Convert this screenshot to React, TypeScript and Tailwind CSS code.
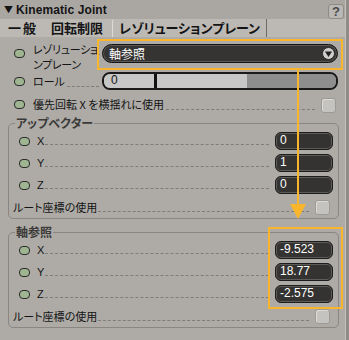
import React from 'react';

// small building blocks for the property panel
const Dot = () => (
  <span className="block w-[11px] h-[9px] rounded-[4px] bg-[#9fb591] border border-[#2a2a2a] shrink-0" />
);

const Dashes = ({ className = '' }: { className?: string }) => (
  <span className={`flex-1 border-b border-dashed border-[#7f7d79] ${className}`} />
);

const Check = () => (
  <span className="block w-[15px] h-[15px] rounded-[3px] bg-[#c5c3c0] border border-[#9c9a96] shadow-[inset_1px_1px_0_#dedcd9] shrink-0" />
);

const Field = ({ value }: { value: string }) => (
  <div className="w-[58px] h-[18px] rounded-[6px] bg-[#343331] border border-[#1c1c1c] shadow-[inset_0_0_0_1px_#5e5c59] text-white text-[12px] leading-[15px] pl-[4px] font-['Liberation_Sans',sans-serif] shrink-0">
    {value}
  </div>
);

const VecRow = ({ label, value }: { label: string; value: string }) => (
  <div className="h-[22px] flex items-center pl-[10px] pr-[5px]">
    <Dot />
    <span className="ml-[7px] text-[11px] leading-[14px] font-['Liberation_Sans',sans-serif]">{label}</span>
    <Dashes className="self-end mb-[7px] ml-[1px]" />
    <span className="ml-[6px]">
      <Field value={value} />
    </span>
  </div>
);

const RootRow = () => (
  <div className="h-[22px] flex items-center pl-[4px] pr-[8px]">
    <span className="text-[11px] leading-[14px]">ルート座標の使用</span>
    <Dashes className="self-end mb-[6px] ml-[1px] mr-[6px]" />
    <Check />
  </div>
);

const Group = ({ title, values, className = '' }: { title: string; values: string[]; className?: string }) => (
  <fieldset className={`ml-[8px] w-[331px] border border-[#8a8783] rounded-[5px] ${className}`}>
    <legend className="ml-[6px] px-[1px] text-[12px] leading-[14px] font-bold text-[#3b3a38]">{title}</legend>
    <VecRow label="X" value={values[0]} />
    <VecRow label="Y" value={values[1]} />
    <VecRow label="Z" value={values[2]} />
    <RootRow />
  </fieldset>
);

export default function App() {
  return (
    <div className="w-[349px] h-[340px] flex bg-[#8f8c88] text-[#141414] font-['Noto_Sans_CJK_JP','Noto_Sans',sans-serif] [font-feature-settings:'palt'] overflow-hidden">
      <div className="relative w-[346px] h-full bg-[#aeaba7] border-r border-[#c4c1bd] flex flex-col">
        {/* title bar */}
        <div className="h-[19px] flex items-center bg-[#aaa7a3] pl-[4px]">
          <span className="text-[9px] leading-none mr-[3px]">▼</span>
          <span className="text-[12px] font-bold font-['Liberation_Sans',sans-serif] tracking-[0.1px]">Kinematic Joint</span>
          <span className="ml-auto mr-[1px] w-[16px] h-[15px] rounded-[3px] bg-[#bab8b4] border border-[#8e8b87] text-[#4a4a4a] text-[13px] leading-[13px] font-bold text-center font-['Liberation_Sans',sans-serif] self-end">
            ?
          </span>
        </div>

        {/* tabs */}
        <div className="h-[18px] flex items-end bg-[#bcb9b5] text-[13px] font-bold leading-[16px]">
          <div className="h-[18px] flex items-center pl-[8px] pr-[9px] tracking-[2px]">一般</div>
          <div className="h-[18px] flex items-center px-[4px]">回転制限</div>
          <div className="h-[18px] flex items-center ml-[5px] px-[6px] border-l border-[#dedbd7] border-r border-r-[#6e6b67] rounded-tl-[3px] bg-[#bcb9b5]">
            レゾリューションプレーン
          </div>
        </div>

        {/* top rows */}
        <div className="pt-[4px]">
          <div className="h-[29px] flex items-start pl-[14px]">
            <span className="mt-[8px]"><Dot /></span>
            <span className="ml-[8px] mt-[1px] w-[59px] text-[11px] leading-[15px] tracking-[-0.3px] whitespace-nowrap">
              レゾリューショ<br />ンプレーン
            </span>
            <Dashes className="mt-[13px] mr-[2px]" />
            <div className="mt-[3px] mr-[7px] w-[236px] h-[19px] rounded-full bg-[#353432] border-[1.5px] border-[#141414] shadow-[inset_0_0_0_1px_#5a5855] flex items-center pl-[6px] pr-[2px] text-white text-[12px]">
              <span className="leading-none">軸参照</span>
              <span className="ml-auto w-[13px] h-[13px] rounded-full bg-[#cfcecb] border border-[#2a2a2a] flex items-center justify-center">
                <svg width="7" height="6" viewBox="0 0 7 6"><path d="M0 0.5h7L3.5 6z" fill="#222" /></svg>
              </span>
            </div>
          </div>

          <div className="h-[22px] flex items-center pl-[14px]">
            <Dot />
            <span className="ml-[8px] text-[11px] leading-[14px]">ロール</span>
            <Dashes className="self-end mb-[5px] ml-[2px] mr-[3px]" />
            <div className="mr-[7px] w-[236px] h-[18px] rounded-[8px] border-[2px] border-[#1a1a1a] overflow-hidden flex">
              <div className="w-[143px] h-full bg-[#c7c7c7] flex">
                <span className="pl-[7px] text-[12px] leading-[13px] font-['Liberation_Sans',sans-serif]">0</span>
                <span className="ml-[36px] w-[3px] h-full bg-[#111]" />
              </div>
              <div className="flex-1 h-full bg-[#8e8e8e]" />
            </div>
          </div>

          <div className="h-[24px] flex items-center pl-[14px]">
            <Dot />
            <span className="ml-[8px] text-[11px] leading-[14px]">優先回転 X を横揺れに使用</span>
            <Dashes className="self-end mb-[6px] ml-[2px] mr-[6px]" />
            <span className="mr-[9px] mt-[2px]"><Check /></span>
          </div>
        </div>

        <Group title="アップベクター" values={['0', '1', '0']} />
        <Group title="軸参照" values={['-9.523', '18.77', '-2.575']} className="mt-[6px]" />

        {/* orange annotations */}
        <div className="absolute left-[97px] top-[39px] w-[246px] h-[31px] border-2 border-[#f9b62c]" />
        <div className="absolute left-[297px] top-[70px] w-[2px] h-[137px] bg-[#f9b62c]" />
        <svg className="absolute left-[290px] top-[204px]" width="16" height="15" viewBox="0 0 16 15">
          <path d="M0 0h16L8 15z" fill="#f9b62c" />
        </svg>
        <div className="absolute left-[268px] top-[227px] w-[75px] h-[82px] border-2 border-[#f9b62c]" />
      </div>
      <div className="flex-1" />
    </div>
  );
}
